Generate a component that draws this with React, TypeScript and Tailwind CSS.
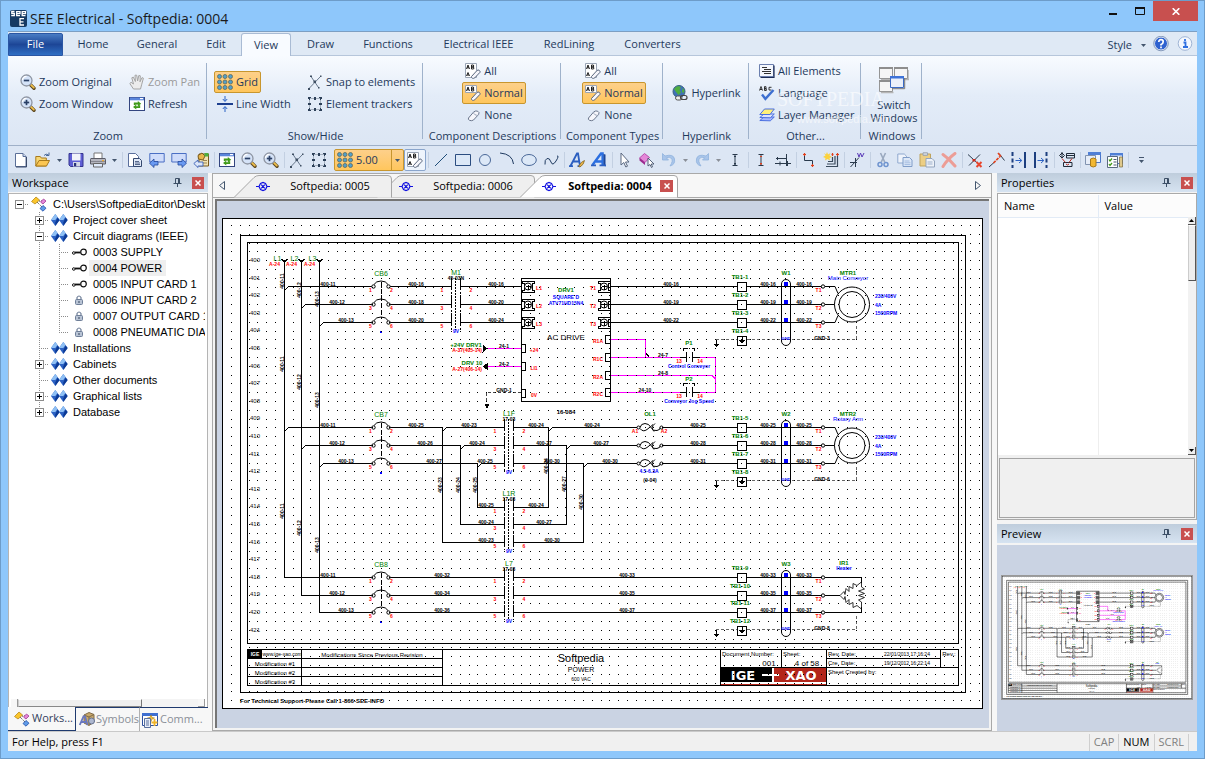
import type { ReactNode } from 'react';

/* ---------- icons ---------- */

function Ic({ children, size = 16 }: { children: ReactNode; size?: number }) {
  return (
    <svg width={size} height={size} viewBox="0 0 16 16" fill="none" className="shrink-0" aria-hidden="true">
      {children}
    </svg>
  );
}

const Magnifier = ({ plus }: { plus?: boolean }) => (
  <Ic>
    <path d="M10.500 10.800l3.500 3.400" stroke="#5f4a22" strokeWidth="3.400" strokeLinecap="round" />
    <path d="M11 10.800l2.800 2.800" stroke="#f0c04c" strokeWidth="1.800" strokeLinecap="round" />
    <circle cx="6.500" cy="6.500" r="5.500" fill="#d5e3f8" stroke="#8f96a3" strokeWidth="1.300" />
    <path d="M2.500 6q.5-3.500 4-3.700" stroke="#fff" strokeWidth="1.300" />
    <path d="M3.800 6.500h5.400" stroke="#2a3f66" strokeWidth="1.700" />
    {plus && <path d="M6.500 3.800v5.400" stroke="#2a3f66" strokeWidth="1.700" />}
  </Ic>
);
const Hand = () => (
  <Ic>
    <path
      d="M4.500 15L.8 9.500l1.300-1.200L4.500 10 2.800 3.800l1.500-.7L6.400 7.500 6 1.200h1.700L8.600 7l1.200-5.500 1.500.3L11 7.800l2-4.200 1.400.6-1.800 6.600L11.500 15z"
      fill="#ececec"
      stroke="#a4a4a4"
      strokeLinejoin="round"
    />
  </Ic>
);
const Refresh = () => (
  <Ic>
    <rect x=".5" y="1.500" width="15" height="13" fill="#fff" stroke="#33457f" />
    <path d="M1 1.500h14v2.800H1z" fill="#5a86dc" />
    <path d="M11 2h3v1.200h-3z" fill="#fff" />
    <path d="M4.800 9V6.500h4V5l3.400 2.700-3.400 2.600V8.500H6.500V9zM11.200 9.200v2.900H7.300v1.500L4 11l3.300-2.400v1.700h2.200V9.200z" fill="#3f9a18" />
  </Ic>
);
const GridDots = () => (
  <Ic>
    {[2.5, 8, 13.5].map((x) =>
      [2.5, 8, 13.5].map((y) => <circle key={`${x}-${y}`} cx={x} cy={y} r="2" fill="#4fa0cc" stroke="#6a7060" strokeWidth=".9" />),
    )}
  </Ic>
);
const LineWidth = () => (
  <Ic>
    <path d="M0 8h16" stroke="#1d3f8f" strokeWidth="2" />
    <path d="M8 0v5M8 16v-5M5.800 3L8 5.500 10.200 3M5.800 13L8 10.500l2.200 2.500" stroke="#2b62c4" />
  </Ic>
);
const Snap = () => (
  <Ic>
    <path d="M2 14.500L13.500 2.500M4 2.500l7.500 11" stroke="#5a6b80" strokeWidth=".9" />
    <path d="M1 14h2v2H1zM13 1.500h1.500V3H13zM3 1.500h2v1.500H3zM11 13h1.500v1.500H11z" fill="#3f4f63" />
    <path d="M6.500 6.500h2.500v2.500H6.500z" fill="#3f4f63" />
  </Ic>
);
const Tracker = () => (
  <Ic>
    <path d="M2.500 2.500h11v11h-11z" stroke="#6a7888" strokeDasharray="1 1" />
    <path
      d="M1 1h3v1H3v2H2V3H1zM12 1h3v2h-1v1h-1V2h-1zM1 13h1v-1h1v2h1v1H1zM13 12h1v1h1v2h-3v-1h1zM7 1h2v3H7zM7 12h2v3H7zM1 7h3v2H1zM12 7h3v2h-3z"
      fill="#2c3f58"
    />
  </Ic>
);
const Eraser = () => (
  <path d="M6.500 13.500L12 7.500q1-1 2.200-.2t.8 2L9.800 14.800q-1.300 1-2.500.4t-.8-1.700z" fill="#f6f6fb" stroke="#59667c" />
);
const AaAll = () => (
  <Ic>
    <path d="M.5.500h11v14H.5z" fill="#fff" stroke="#9aa5b5" />
    <path d="M1.500 6L3 2l1.500 4M2 4.800h2M6.500 2v4h2q1-1-.2-2-1.800 0-1.800 0h1.800q1-1 0-2zM1.500 13L3 9.500 4.500 13M2 12h2" stroke="#222" />
    <Eraser />
  </Ic>
);
const AaNormal = () => (
  <Ic>
    <path d="M.5.500h11v7H.5z" fill="#fff" stroke="#9aa5b5" />
    <path d="M1.500 6L3 2l1.500 4M2 4.800h2M6.500 2v4h2q1-1-.2-2-1.800 0-1.800 0h1.800q1-1 0-2z" stroke="#222" />
    <Eraser />
  </Ic>
);
const EraserOnly = () => (
  <Ic>
    <path d="M3.500 11L8.800 4.800q2-1.500 4-.5t.8 3.200L8.500 13q-1.800 1.200-3.800.4T3.500 11z" fill="#f6f6fb" stroke="#6a768c" />
    <path d="M8.800 4.800q-.5 2 1 2.800t3 .7" stroke="#9aa5b8" />
  </Ic>
);
const Globe = () => (
  <Ic>
    <circle cx="7" cy="6.500" r="6" fill="#3f72b8" stroke="#39607f" />
    <path d="M2 4q2-3 5-3l2 1.500L7.500 5 9 7.500 6.500 10 4 7zM11 3l1.500 3L11 8.500 9.800 6z" fill="#4fae3f" />
    <rect x="3.500" y="11" width="6.500" height="4" rx="2" fill="#eee" stroke="#555" />
    <rect x="8.500" y="10.500" width="6.500" height="4" rx="2" stroke="#444" strokeWidth="1.200" />
  </Ic>
);
const Elements = () => (
  <Ic>
    <path d="M.5 1.500h14v12H.5z" fill="#f4f7fd" stroke="#6b7fae" />
    <path d="M15 2.500v12H1.500" stroke="#1d2c55" strokeWidth="1.200" />
    <path d="M3 4.500h5M5 6.500h7M3 8.500h9M5 10.500h7" stroke="#333" />
  </Ic>
);
const Language = () => (
  <Ic>
    <path d="M.5 5.500L2 1.500l1.500 4M1 4.500h2M5.500 1.500v4h1.800V3.700H5.500 7V1.700H5.500M12.500 2.300H10V5h2.500" stroke="#222" strokeWidth=".9" />
    <path d="M3 9.500l3.400 4.300L14.500 5" stroke="#3d6fd0" strokeWidth="2.400" />
  </Ic>
);
const Layers = () => (
  <Ic>
    <path d="M.8 13.500L5 10h10.300l-4 3.800z" fill="#a9b9ff" stroke="#4a6fe0" />
    <path d="M.8 10.500L5 7h10.300l-4 3.800z" fill="#dbe2ff" stroke="#4a6fe0" />
    <path d="M.8 7.500L5.500 2h9.800L11 7.500z" fill="#fff07a" stroke="#4a6fe0" />
  </Ic>
);
const SwitchWindows = () => (
  <svg width="30" height="28" viewBox="0 0 30 28" fill="none" aria-hidden="true">
    <path d="M2 13.500h13.500M17 13.500h13V4M14.500 26.500H2" stroke="#b5b5b5" strokeWidth="1.500" />
    <path d="M.5 1.500h13v11H.5zM15.500 1.500h13v11h-13zM.5 14.500h13v11H.5z" fill="#f5f5f5" stroke="#959595" />
    <path d="M0 1h14v2H0zM15 1h14v2H15zM0 14h14v2H0z" fill="#8e8e8e" />
    <path d="M11.500 10.500h13v11h-13z" fill="#eaf0fa" stroke="#3a6ac4" />
    <path d="M11 10h14v2.500H11z" fill="#3f73d8" />
    <path d="M25.700 12v10.700H13" stroke="#777" />
  </svg>
);
const NewDoc = () => (
  <Ic>
    <path d="M2.500 1.500h7.500l3 3v10H2.500z" fill="#fff" stroke="#5a6f98" />
    <path d="M10 1.500v3h3" stroke="#5a6f98" fill="#cfdaee" />
    <path d="M13.500 5v10H3" stroke="#3a4a6a" />
  </Ic>
);
const Open = () => (
  <Ic>
    <path d="M.8 14V4.500h4.500l1 1.500h5v8z" fill="#f7d774" stroke="#a87a1c" />
    <path d="M.8 14L4 8.500h10.500L11.500 14z" fill="#fbc652" stroke="#a87a1c" />
    <path d="M9 3.500q2-2.500 4.500-.5M14 .5v3h-3" stroke="#4a6a9a" />
  </Ic>
);
const Save = () => (
  <Ic>
    <path d="M1 1.500h14v13H2.500L1 13z" fill="#5f5fd6" stroke="#34348f" />
    <path d="M4 1.500h8.500v7H4z" fill="#f0f2fa" />
    <path d="M5 10h7v4.500H5z" fill="#d4d8e6" />
    <path d="M6 11h2.200v3.200H6z" fill="#27307a" />
  </Ic>
);
const Print = () => (
  <Ic>
    <path d="M4 6V1h8v5" fill="#fff" stroke="#777" />
    <path d="M1 6.500h14q.5 0 .5 1V12H.5V7.500q0-1 .5-1z" fill="#b4b5be" stroke="#5b5c66" />
    <path d="M1 9.500h14" stroke="#85868f" />
    <path d="M3.500 11.500h9V15h-9z" fill="#dfeafa" stroke="#666" />
    <path d="M12 8h2v1.200h-2z" fill="#e8a83c" />
  </Ic>
);
const DocProps = () => (
  <Ic>
    <path d="M1.500 1.500h7l3 3v10h-10z" fill="#fff" stroke="#5a6f9c" />
    <path d="M6.500 6.500h6l2 2v6h-8z" fill="#dfe8f8" stroke="#34486e" />
    <path d="M8 9.500h4M8 11h5M8 12.500h5" stroke="#34486e" strokeWidth=".8" />
  </Ic>
);
const PageNav = ({ fwd }: { fwd?: boolean }) => (
  <Ic>
    <path d="M.8 1.500h14.400v8.500H.8z" fill="#cfdcfa" stroke="#4a6fc4" />
    {fwd ? (
      <path d="M7 9.500h4V7l4.500 4.200L11 15.500V13H7z" fill="#6a9af2" stroke="#22479a" strokeWidth=".8" />
    ) : (
      <path d="M9 9.500H5V7L.5 11.200 5 15.500V13h4z" fill="#6a9af2" stroke="#22479a" strokeWidth=".8" />
    )}
  </Ic>
);
const HandDoc = () => (
  <Ic>
    <path d="M6 2h9.500v12H6z" fill="#f2e3b4" stroke="#7a5a1c" />
    <path d="M5 3.500L9 1l3 3-2 4-4.500-1z" fill="#e8b64c" stroke="#7a5a1c" />
    <path d="M11.500 1h4v3.500h-4z" fill="#4fae3f" />
    <path d="M10 8.500h4M10 11h4" stroke="#9a8654" />
    <path d="M.8 11.500L5 8v2h5v4H5v1.500z" fill="#dce6f8" stroke="#3d62b8" strokeWidth=".9" />
  </Ic>
);
const LineI = () => (
  <Ic>
    <path d="M2 14L14 2" stroke="#1f4e79" />
  </Ic>
);
const RectI = () => (
  <Ic>
    <path d="M.5 2.500h15v11H.5z" fill="#dce8f7" stroke="#2b4d80" />
  </Ic>
);
const CircleI = () => (
  <Ic>
    <circle cx="8" cy="8" r="5.500" fill="#dce8f7" stroke="#4a6898" />
  </Ic>
);
const ArcI = () => (
  <Ic>
    <path d="M1 1Q13.500 2 14.500 12" stroke="#1f3a60" />
  </Ic>
);
const EllipseI = () => (
  <Ic>
    <ellipse cx="8" cy="8" rx="7.300" ry="5.500" fill="#dce8f7" stroke="#4a6898" />
  </Ic>
);
const CurveI = () => (
  <Ic>
    <path d="M2 12.500Q1.500 7.500 4 6.500T8 10t5-1 1-5" stroke="#1f3a60" />
  </Ic>
);
const TextA = () => (
  <Ic>
    <path d="M1.500 14L8 1.500h1L11 14M4 9.500h6M0 14.200h4M8.500 14.200h3.500" stroke="#2c5fc0" strokeWidth="1.800" />
    <path d="M9.500 14.500q2.500-5 6-6-.5 4-4.500 6.500z" fill="#e8b64c" stroke="#7a5a1c" strokeWidth=".7" />
  </Ic>
);
const TextB = () => (
  <Ic>
    <path d="M1.500 13L10 1.500h1.600V13M5 9.500h6" stroke="#2c6fe0" strokeWidth="2.400" />
    <path d="M12.500 2l2 .5v12l-2-1z" fill="#1d4697" />
    <path d="M0 13.400h5M8.500 13.400h6.500" stroke="#2c5fc0" strokeWidth="1.800" />
  </Ic>
);
const Cursor = () => (
  <Ic>
    <path d="M4 1v12l2.800-2.500L8.800 15l1.700-.8-2-4.200H12z" fill="#fff" stroke="#5a6880" />
  </Ic>
);
const CursorBox = () => (
  <Ic>
    <path d="M.5 6l5-4.500 5 4-4.500 5z" fill="#e487d8" stroke="#b84fac" />
    <path d="M.5 6l5.500 4.500v2.500L.5 8.500z" fill="#9a2a8e" />
    <path d="M9 6v8l2-1.500 1.500 3 1-.6-1.200-2.900H15z" fill="#fff" stroke="#45546c" strokeWidth=".9" />
  </Ic>
);
const Undo = ({ flip }: { flip?: boolean }) => (
  <Ic>
    <path
      d={
        flip
          ? 'M14.500 1.500v6.500H8.500l2.200-2.200Q7.500 4.200 5.500 6.500T7 14Q1.500 12.500 2.500 7t9.500-3z'
          : 'M1.500 1.500v6.500h6L5.300 5.800Q8.500 4.200 10.500 6.500T9 14q5.500-1.500 4.500-7T4 4z'
      }
      fill="#a9c5ea"
      stroke="#8fb2dd"
      strokeWidth=".8"
    />
  </Ic>
);
const IBeam = ({ red }: { red?: boolean }) => (
  <Ic>
    <path d="M5.500 2.500H8M8 2.500h2.500M5.500 13.500h5M8 2.500v11" stroke="#2a3a4c" />
    <path d="M7 4h2v1H7zM7 11h2v1.500H7z" fill={red ? '#e0401c' : '#2a3a4c'} />
  </Ic>
);
const BarsCross = () => (
  <Ic>
    <path d="M1 6.500h11M0 11.500h16M11.500 2v12" stroke="#2a3a4c" />
    <path d="M2.500 5v3M5 9.500v4M12.500 9v5" stroke="#2a3a4c" />
  </Ic>
);
const StepLine = () => (
  <Ic>
    <path d="M3.500 3v5.500h8V13" stroke="#2a3a4c" />
    <path d="M2 2.500h3M3.500 1v3M10 13.500h3M11.500 12v3" stroke="#e0401c" strokeWidth="1.200" />
  </Ic>
);
const StarLines = () => (
  <Ic>
    <path d="M4 0l1 2.500L7.500 1 6.500 3.500 9 5 6.500 6l.5 2.500L4.500 7 2 8.500 2.500 6 0 5l2.500-1.500L1 1l2 1.500z" fill="#fbd23c" />
    <path d="M14.500 4v10.500H3M12 4v8H4M9.500 5v4.500H5" stroke="#3a4a5c" strokeWidth="1.200" />
    <path d="M9.500 1v3M8.500 2.500h2M14.500 1v3M13 2.500h3" stroke="#e0401c" strokeWidth="1.200" />
  </Ic>
);
const WireLabel = () => (
  <Ic>
    <path d="M1.500 15L10 5.500M1 10.500h7M6.500 6v9" stroke="#2a3a4c" />
    <path d="M8.500 1L10 5l1.500-4L13 5l2-4" stroke="#5a3ab8" />
  </Ic>
);
const Cut = () => (
  <Ic>
    <path d="M5.500 1l4.200 9M10.500 1L6.300 10" stroke="#9aa9bf" strokeWidth="1.600" />
    <circle cx="5" cy="12.500" r="2" stroke="#6f94cf" strokeWidth="1.500" />
    <circle cx="11" cy="12.500" r="2" stroke="#6f94cf" strokeWidth="1.500" />
  </Ic>
);
const Copy = () => (
  <Ic>
    <path d="M.8 2h6.500l2.200 2.200V11H.8z" fill="#eef3fb" stroke="#8fa9cf" />
    <path d="M6 5.500h6.500L15 8v6.500H6z" fill="#dde8f8" stroke="#7f9cc8" />
    <path d="M7.500 9h5M7.500 10.800h6M7.500 12.600h6" stroke="#9db7dd" strokeWidth=".9" />
  </Ic>
);
const Paste = () => (
  <Ic>
    <path d="M1 2h10.500v12H1z" fill="#ecce84" stroke="#bfa35c" />
    <path d="M4 .8h4.500v2.500H4z" fill="#d8dce4" stroke="#9aa3b0" />
    <path d="M7 6.500h6L15.500 9v6H7z" fill="#eef2f8" stroke="#93a4bd" />
    <path d="M8.500 10h5M8.500 12h5" stroke="#9db0cc" />
  </Ic>
);
const Delete = () => (
  <Ic>
    <path d="M2 2.500Q8 6.500 14 14M14 1.500Q7 6.500 2 14.500" stroke="#ec9d96" strokeWidth="3" strokeLinecap="round" />
  </Ic>
);
const CutNode = () => (
  <Ic>
    <path d="M1 2.500l11 10M13 2.500L2 13.500" stroke="#2a3a4c" />
    <path d="M9.500 10l5 5M14.500 10l-5 5" stroke="#e8452c" strokeWidth="2" />
    <path d="M5.500 7h3v2.500h-3z" fill="#c82a1c" />
  </Ic>
);
const Diagonal = () => (
  <Ic>
    <path d="M0 15l5-4.500M10 1.500l5.500 7" stroke="#2a3a4c" />
    <path d="M4.500 11L11 4.500" stroke="#e0401c" strokeWidth="1.600" strokeDasharray="3 1" />
    <path d="M9 1l3 3.500" stroke="#e0401c" strokeWidth="1.600" />
  </Ic>
);
const AlignBars = ({ flip }: { flip?: boolean }) => (
  <Ic>
    <path d={flip ? 'M2 0v16' : 'M14 0v16'} stroke="#1d3f7f" strokeWidth="2" />
    <path d={flip ? 'M13.500 0v16' : 'M1.500 0v16'} stroke="#1d3f7f" strokeWidth="2" strokeDasharray="4 2.500" />
    <path d="M4.500 8.500h6M8 6l2.800 2.500L8 11" stroke="#2b62c4" />
  </Ic>
);
const Network = () => (
  <Ic>
    <path d="M3 0v6M.5 3.500L3 1l2.500 2.500L3 6zM7.500 1.500h8v4.500h-8zM7.500 3.500h8M4.500 10.500h8.500v4H4.500z" stroke="#1f2a38" />
    <path d="M3 6.500l3.500 4M13 6.500l-3 4M7 12l1.500 1L10 12" stroke="#b8281c" />
  </Ic>
);
const DbWindow = () => (
  <Ic>
    <path d="M3.500.500h12v10h-12z" fill="#eef4fd" stroke="#4a76c8" />
    <path d="M3 0h13v3H3z" fill="#4f7fd6" />
    <path d="M.5 3.500h10v9H.5z" fill="#e6edf8" stroke="#8193b0" />
    <path d="M5.500 7v7q2.700 2 5.500 0V7q-2.800-2-5.500 0z" fill="#f2b832" stroke="#a87a1c" />
  </Ic>
);
const CheckWindow = () => (
  <Ic>
    <path d="M3.500 1.500h12v10h-12z" fill="#eef4fd" stroke="#4a76c8" />
    <path d="M3 1h13v2.500H3z" fill="#4f7fd6" />
    <path d="M12.500 5h3v10h-3z" fill="#dfc98c" stroke="#7a6a3c" strokeWidth=".7" />
    <path d="M.5 4.500h10v11H.5z" fill="#fff" stroke="#5a6a80" />
    <path d="M2 7.500L3 9l2-2.500M2 12l1 1.500L5 11" stroke="#3f9a18" strokeWidth="1.300" />
    <path d="M6.500 7.500h3M6.500 10h3M6.500 13h3" stroke="#4a5a70" />
  </Ic>
);
const Pin = () => (
  <svg width="9" height="9" viewBox="0 0 9 9" fill="none" aria-hidden="true">
    <path d="M2.500 5V.5h4V5M5.500.5V5M.5 5.500h8M4.500 6v3" stroke="#3c4f66" />
  </svg>
);
const CloseX = () => (
  <svg width="6" height="6" viewBox="0 0 6 6" aria-hidden="true">
    <path d="M.5.5l5 5M5.500.5l-5 5" stroke="#fff" strokeWidth="1.500" />
  </svg>
);
const Caret = ({ muted }: { muted?: boolean }) => (
  <svg width="5" height="3" viewBox="0 0 5 3" aria-hidden="true">
    <path d="M0 0h5L2.500 3z" fill={muted ? '#8a8f98' : '#44566e'} />
  </svg>
);
const Folders = () => (
  <svg width="17" height="12" viewBox="0 0 17 12" aria-hidden="true">
    {[0, 8].map((x) => (
      <g key={x}>
        <path d={`M${x} 6l4.300-6 4.300 6-4.300 6z`} fill="#2c62c4" />
        <path d={`M${x + 4.3} 0L${x} 6h4.300l2.200-3z`} fill="#8fc0f4" />
        <path d={`M${x + 4.3} 12l4.300-6-2-2.500-2.300 5z`} fill="#0c3a94" />
      </g>
    ))}
  </svg>
);
const ProjectIcon = () => (
  <Ic>
    <path d="M6 6l5 5M8 5h4" stroke="#333" strokeDasharray="1 1" />
    <path d="M.5 5.500L5 1l3.500 3-4.500 4z" fill="#fbc62c" stroke="#b88a1c" strokeWidth=".8" />
    <path d="M9.500 6l3-3L15 5l-3 3z" fill="#e487d8" stroke="#a23a96" strokeWidth=".8" />
    <path d="M9 12.500l3-3 3 2.700-3 3z" fill="#5f9be8" stroke="#1f4ea8" strokeWidth=".8" />
  </Ic>
);
const SwitchNode = () => (
  <svg width="15" height="9" viewBox="0 0 15 9" fill="none" aria-hidden="true">
    <circle cx="1.800" cy="5" r="1.300" fill="#fff" stroke="#111" />
    <path d="M3 4.500h5.500" stroke="#111" strokeWidth="1.800" />
    <circle cx="11.500" cy="4" r="2.800" fill="#fff" stroke="#111" strokeWidth="1.200" />
  </svg>
);
const Lock = () => (
  <svg width="8" height="10" viewBox="0 0 8 10" fill="none" aria-hidden="true">
    <path d="M2 5V2.500Q4-.5 6 2.500V5" stroke="#6f7f98" strokeWidth="1.200" />
    <rect x=".5" y="4.500" width="7" height="5" rx="1" fill="#b8c3d4" stroke="#6f7f98" />
    <path d="M3 7h2" stroke="#34445c" />
  </svg>
);
const TabNode = () => (
  <svg width="14" height="11" viewBox="0 0 14 11" fill="none" aria-hidden="true">
    <path d="M0 5.500h3M11 5.500h3M3 5.500l1.500-3L7 1.500l2.500 1 1.500 3-1.500 3-2.500 1-2.500-1zM5.200 3.700l3.600 3.600M8.800 3.700L5.200 7.300" stroke="#1010e0" strokeWidth="1.200" />
  </svg>
);
const SymbolsIcon = () => (
  <Ic>
    <path d="M5 3l5-2.500 5 2V10l-5 3.500L5 11z" fill="#c9a86a" stroke="#7f6a48" />
    <path d="M5 3l5 2v8M10 5l5-2.500" stroke="#7f6a48" />
    <path d="M.8 13L4.500 4.500H6L8.500 13M2 10h5" stroke="#6a78c0" strokeWidth="1.800" />
    <circle cx="12.500" cy="9" r="3" fill="#aeb8d0" stroke="#66728f" />
  </Ic>
);
const CommandsIcon = () => (
  <Ic>
    <path d="M.5 1.500h15v12H.5z" fill="#fff" stroke="#2d4f9e" />
    <path d="M0 1h16v3H0z" fill="#3f6fd0" />
    <path d="M9 3l1 2.500L12.500 6 10 7 9 9.500 8 7 5.500 6 8 5.500z" fill="#fbc62c" stroke="#a87a1c" strokeWidth=".6" />
    <path d="M2.500 6.500h6v9h-6z" fill="#e9effa" stroke="#5a6f9c" />
    <path d="M4 9h3M4 11h3M4 13h3" stroke="#5a6f9c" />
    <path d="M12.500 7v7M9.500 10.500h6" stroke="#f0b428" strokeWidth="1.800" />
  </Ic>
);

/* ---------- schematic ---------- */

const GREEN = '#008000';
const BLUE = '#0000ff';
const RED = '#ff0000';
const PINK = '#ff00ff';

type LabelProps = { x: number; y: number; c?: string; s?: number; a?: 'start' | 'middle' | 'end'; v?: boolean; b?: boolean; children: ReactNode };
function L({ x, y, c = '#000', s = 5, a = 'middle', v, b = true, children }: LabelProps) {
  return (
    <text
      x={x}
      y={y}
      fill={c}
      fontSize={s}
      textAnchor={a}
      fontWeight={b ? 700 : 400}
      stroke="none"
      transform={v ? `rotate(-90 ${x} ${y})` : undefined}
    >
      {children}
    </text>
  );
}

const dots = (() => {
  let d = '';
  for (let i = 0; i < 86; i++)
    for (let j = 0; j < 56; j++) {
      const x = Math.round(231 + i * 8.8);
      const y = Math.round(225 + j * 8.8);
      if (x < 982 && y < 710) d += `M${x} ${y}h1v1h-1z`;
    }
  return d;
})();

function Breaker({ rows, name }: { rows: number[]; name: string }) {
  return (
    <g>
      <L x={381} y={rows[0] - 11} c={GREEN} s={7} b={false}>{name}</L>
      <path d={`M381.500 ${rows[0] - 5}V${rows[2] - 4}`} strokeDasharray="5 2" />
      {rows.map((y, i) => (
        <g key={y}>
          <g shapeRendering="auto">
            <path d={`M374 ${y - 2}Q376 ${y - 5.5} 381 ${y - 5.5}T388 ${y - 2}`} />
            <circle cx="373.500" cy={y} r="1.700" fill="#fff" />
            <circle cx="388.500" cy={y} r="1.700" fill="#fff" />
          </g>
          <L x={370.5} y={y + 5} c={RED}>{i * 2 + 1}</L>
          <L x={391.5} y={y + 5} c={RED}>{i * 2 + 2}</L>
        </g>
      ))}
      <path d={`M380 ${rows[2] + 9.5}h2`} stroke={BLUE} strokeWidth="2" />
    </g>
  );
}

function Contactor({ x, rows, name, sub }: { x: number; rows: number[]; name: string; sub: string }) {
  const top = rows[0] - 9;
  const bottom = rows[2] + 7;
  return (
    <g>
      <path d={`M${x - 4.5} ${top}h9V${bottom}h-9z`} fill="#fff" stroke="none" />
      <path d={`M${x - 4.5} ${top}V${bottom}M${x + 4.5} ${top}V${bottom}`} strokeDasharray="12 2 2 2" />
      <path d={`M${x - 0.5} ${top}V${bottom}`} strokeDasharray="2 1" />
      <L x={x} y={top - 3} c={GREEN} s={7} b={false}>{name}</L>
      <L x={x} y={top + 2}>{sub}</L>
      <L x={x} y={bottom + 3} c={BLUE}>9V</L>
      {rows.map((y, i) => (
        <g key={y}>
          <L x={x - 14} y={y + 5} c={RED}>{i * 2 + 1}</L>
          <L x={x + 15} y={y + 5} c={RED}>{i * 2 + 2}</L>
        </g>
      ))}
    </g>
  );
}

function Terminals({ rows, first, cable, wires }: { rows: number[]; first: number; cable: string; wires: string[] }) {
  const g = rows[2] + 17;
  return (
    <g>
      <path d={`M716 ${g}H737M747 ${g}H856.500V${rows[2] + 1}`} stroke="#666" strokeDasharray="3 2" />
      <path d={`M716.500 ${g}v7`} />
      <path d={`M713.500 ${g + 4}h6l-3 4z`} fill="#000" stroke="none" />
      {[...rows, g + 1].map((y, i) => (
        <g key={y}>
          <rect x="737.500" y={y - 4.5} width="9" height="9" fill="#fff" />
          <L x={740} y={y - 8} c={GREEN} s={6}>{`TB1-${first + i}`}</L>
        </g>
      ))}
      <path d={`M742 ${g - 3}v4M739.500 ${g + 1}h5l-2.500 2z`} fill="#000" />
      <rect x="781.500" y={rows[0] - 7} width="9" height="66" rx="4.500" shapeRendering="auto" />
      <L x={786} y={rows[0] - 12} c={GREEN} s={6}>{cable}</L>
      {rows.map((y, i) => (
        <g key={y}>
          <rect x="784" y={y - 4} width="3" height="3" fill={BLUE} stroke={BLUE} />
          <L x={768} y={y - 0.5}>{wires[i]}</L>
          <L x={804} y={y - 0.5}>{wires[i]}</L>
          <circle cx="823" cy={y} r="1.700" fill="#fff" shapeRendering="auto" />
          <L x={818.5} y={y + 5} c={RED}>{`T${i + 1}`}</L>
        </g>
      ))}
      <L x={786} y={g} c={BLUE} s={4}>GND</L>
      <L x={822} y={g}>{`GND-${first === 1 ? 3 : first === 5 ? 6 : 8}`}</L>
    </g>
  );
}

function Motor({ y, name, desc }: { y: number; name: string; desc: string }) {
  return (
    <g>
      <g shapeRendering="auto">
        <circle cx="852" cy={y} r="17.500" fill="#fff" />
        <circle cx="852" cy={y} r="13" />
        <path d={`M825 ${y - 18}h10l3 7M825 ${y + 18}h10l3-7M825 ${y}h9.500`} />
      </g>
      <L x={848} y={y - 30} c={GREEN} s={6}>{name}</L>
      <L x={848} y={y - 24.5} c={BLUE} s={6} b={false}>{desc}</L>
      <L x={875} y={y - 7} c={BLUE} a="start">230/400V</L>
      <L x={875} y={y + 2} c={BLUE} a="start">4A</L>
      <L x={875} y={y + 10} c={BLUE} a="start">1500RPM</L>
    </g>
  );
}

const ROWS_A = [286.5, 304.5, 322.5];
const ROWS_B = [427.5, 445.5, 463.5];
const ROWS_R = [507.5, 524.5, 542.5];
const ROWS_C = [577.5, 595.5, 612.5];
const FEEDS = [284.5, 301.5, 319.5];

function Schematic({ className, smooth }: { className: string; smooth?: boolean }) {
  return (
    <svg
      viewBox="222 218 761 491"
      className={className}
      fill="none"
      stroke="#000"
      strokeWidth={smooth ? 2 : 1}
      shapeRendering={smooth ? 'auto' : 'crispEdges'}
      fontFamily="'Liberation Sans', Arial, sans-serif"
      role="img"
      aria-label="Circuit diagram 0004 POWER"
    >
      <rect x="222.500" y="218.500" width="760" height="490" fill="#fff" />
      <path d="M240.500 235.500h725v457h-725zM247.500 242.500h711v401h-711z" />
      {Array.from({ length: 22 }, (_, i) => (
        <L key={i} x={250} y={262 + i * 17.6} s={6} a="start" b={false} c="#111">{400 + i}</L>
      ))}

      {/* supply feeders */}
      {FEEDS.map((x, i) => (
        <g key={x}>
          <path d={`M${x} 260V${ROWS_C[i]}H372`} />
          <path d={`M${x - 3} 259l3 3 3-3M${x - 1} 261h2`} strokeWidth="1.500" />
          <L x={x - 7} y={261} c={GREEN} s={7} b={false}>{`L${i + 1}`}</L>
          <L x={x - 10} y={266} c={RED}>A-24</L>
          {[273 + i * 9, 356 + i * 18, 503 + i * 17].map((y) => (
            <L key={y} x={x - 1} y={y + 8} v>{`400-1${i + 1}`}</L>
          ))}
          {[ROWS_A[i], ROWS_B[i]].map((y) => (
            <g key={y}>
              <path d={`M${x} ${y + 4}l4-4H372`} />
              <L x={328 + i * 9} y={y - 0.5}>{`400-1${i + 1}`}</L>
            </g>
          ))}
          <L x={328 + i * 9} y={ROWS_C[i] - 0.5}>{`400-1${i + 1}`}</L>
        </g>
      ))}

      {/* main conveyor drive */}
      {ROWS_A.map((y, i) => (
        <g key={y}>
          <path d={`M390 ${y}H521M611 ${y}H822`} />
          <L x={416} y={y - 0.5}>{`400-${16 + i * 2}`}</L>
          <L x={496} y={y - 0.5}>{`400-${16 + i * 4}`}</L>
          <L x={671} y={y - 0.5}>{`400-${16 + i * 3}`}</L>
        </g>
      ))}
      <Breaker rows={ROWS_A} name="CB6" />
      <Contactor x={456} rows={ROWS_A} name="M1" sub="45-03N" />
      <rect x="521.500" y="278.500" width="89" height="123" fill="#fff" />
      {ROWS_A.map((y, i) => (
        <g key={y}>
          {[528, 604].map((x) => (
            <g key={x}>
              <path d={`M${x - 6} ${y - 5}h12v2h-2v7h2v2h-12v-2h2v-7h-2z`} fill="#fff" />
              <circle cx={x} cy={y} r="3.500" fill="#fff" shapeRendering="auto" />
              <path d={`M${x - 2} ${y}h5M${x + 0.5} ${y - 2}v5`} strokeWidth="1.500" />
            </g>
          ))}
          <L x={539} y={y + 3} c={RED}>{`L${i + 1}`}</L>
          <L x={593} y={y + 3} c={RED}>{`T${i + 1}`}</L>
        </g>
      ))}
      <L x={566} y={292} c={GREEN} s={6}>DRV1</L>
      <L x={566} y={299} c={BLUE}>SQUARE D</L>
      <L x={566} y={305} c={BLUE}>ATV71HD15N4</L>
      <L x={566} y={340} s={8} b={false}>AC DRIVE</L>
      <L x={566} y={414} s={6}>16-084</L>
      {[348.5, 366.5, 393.5].map((y, i) => (
        <g key={y}>
          <rect x="521.500" y={y - 4} width="4" height="8" fill="#fff" />
          <L x={534} y={y + 3} c={RED}>{['+24', 'LI1', '0V'][i]}</L>
        </g>
      ))}
      {[339.5, 357.5, 375.5, 392.5].map((y, i) => (
        <g key={y}>
          <rect x="605.500" y={y - 4} width="5" height="8" fill="#fff" />
          <L x={598} y={y + 3} c={RED}>{['R1A', 'R1C', 'R2A', 'R2C'][i]}</L>
        </g>
      ))}
      <path d="M486 348.500H521M486 366.500H521M611 339.500H645.500V357.500M611 357.500H680M700 357.500H715.500V392.500H700M611 375.500H712l3 3M611 392.500H680" stroke={PINK} />
      <path d="M483 345.500l4 3-4 3zM487.500 363.500l-4 3 4 3z" fill="#000" />
      <L x={466} y={347} c={GREEN} s={6}>+24V DRV1</L>
      <L x={467} y={352} c={RED}>A-37(405-14)</L>
      <L x={472} y={365} c={GREEN} s={6}>DRV 10</L>
      <L x={467} y={371} c={RED}>A-27(406-14)</L>
      <L x={504} y={347.5}>24-1</L>
      <L x={504} y={365.5}>24-2</L>
      <L x={504} y={391.5}>GND-1</L>
      <path d="M521 392.500H486.500V403" strokeDasharray="3 2" stroke="#444" />
      <path d="M484 403.500h6l-3 5z" fill="#000" stroke="none" />
      <path d="M646 353l3 4M680 357.500h6M692 357.500h8M686.500 352v10M692.500 352v10M680 392.500h6M692 392.500h8M686.500 387v10M692.500 387v10" />
      <path d="M683.500 351v-3h4m4 0h3v3M683.500 386v-3h4m4 0h3v3" />
      <L x={689} y={345} c={GREEN} s={6}>P1</L>
      <L x={689} y={381} c={GREEN} s={6}>P2</L>
      <L x={663} y={356.5}>24-7</L>
      <L x={663} y={374.5}>24-8</L>
      <L x={645} y={391.5}>24-10</L>
      {[357.5, 392.5].map((y) => (
        <g key={y}>
          <L x={679} y={y + 5} c={RED}>13</L>
          <L x={700} y={y + 5} c={RED}>14</L>
        </g>
      ))}
      <L x={689} y={368} c={BLUE}>Control Conveyor</L>
      <L x={689} y={403} c={BLUE}>Conveyor Jog Speed</L>
      <Terminals rows={ROWS_A} first={1} cable="W1" wires={['400-16', '400-19', '400-22']} />
      <Motor y={304.5} name="MTR1" desc="Main Conveyor" />

      {/* reversing starter */}
      {ROWS_B.map((y, i) => {
        const lx = [442.5, 460.5, 477.5][i];
        const rx = [548.5, 566.5, 583.5][i];
        const back = ROWS_R[2 - i];
        const out = ROWS_R[i];
        return (
          <g key={y}>
            <path d={`M390 ${y}H${lx}V${back}H504M${lx} ${y + 4}l4-4H${rx}V${out}H514M${rx} ${y + 4}l4-4H637M663 ${y}H822`} />
            <L x={416 + i * 9} y={y - 0.5}>{`400-${25 + i}`}</L>
            <L x={469 + i * 8} y={y - 0.5}>{`400-${23 + i}`}</L>
            <L x={486 - i * 0} y={out - 0.5}>{`400-${25 - i}`}</L>
            <L x={536 + i * 8} y={y - 0.5}>{`400-${24 + i * 3}`}</L>
            <L x={536 + i * 8} y={out - 0.5}>{`400-${24 + i * 3}`}</L>
            <L x={592 + i * 9} y={y - 0.5}>{`400-${24 + i * 3}`}</L>
            <L x={698} y={y - 0.5}>{`400-${25 + i * 3}`}</L>
            <L x={lx - 1} y={485} v>{`400-${23 + i}`}</L>
            <L x={rx - 1} y={466 + i * 18} v>{`400-${24 + i * 3}`}</L>
            <g shapeRendering="auto">
              <path d={`M640 ${y}Q641 ${y - 4} 645 ${y - 4}T651 ${y}Q653 ${y + 4} 657 ${y + 3}T660 ${y}M640 ${y + 1}Q643 ${y + 5} 647 ${y + 2}T653 ${y - 3}M655 ${y - 4}Q650 ${y} 654 ${y + 4}`} />
              <circle cx="638.500" cy={y} r="1.500" fill="#fff" />
              <circle cx="661.500" cy={y} r="1.500" fill="#fff" />
            </g>
          </g>
        );
      })}
      <L x={635} y={433} c={RED}>A1</L>
      <L x={664} y={433} c={RED}>A2</L>
      <Breaker rows={ROWS_B} name="CB7" />
      <Contactor x={509} rows={ROWS_B} name="L1F" sub="17-03" />
      <Contactor x={509} rows={ROWS_R} name="L1R" sub="17-03" />
      <L x={650} y={416} c={GREEN} s={6}>OL1</L>
      <L x={649} y={473} c={BLUE}>4.5-6.3A</L>
      <L x={650} y={482}>(9-04)</L>
      <Terminals rows={ROWS_B} first={5} cable="W2" wires={['400-25', '400-28', '400-31']} />
      <Motor y={445.5} name="MTR2" desc="Rotary Arm" />

      {/* heater circuit */}
      {ROWS_C.map((y, i) => (
        <g key={y}>
          <path d={`M390 ${y}H504M514 ${y}H822`} />
          <L x={442} y={y - 0.5}>{`400-${32 + i * 2}`}</L>
          <L x={627} y={y - 0.5}>{`400-${33 + i * 2}`}</L>
        </g>
      ))}
      <Breaker rows={ROWS_C} name="CB8" />
      <Contactor x={509} rows={ROWS_C} name="L7" sub="17-03" />
      <Terminals rows={ROWS_C} first={9} cable="W3" wires={['400-33', '400-35', '400-37']} />
      <path d="M825 577.500H861.500V583M825 595.500H840M825 612.500H861.500V607" />
      <path
        d="M840 595.500l4-4 1 3 1-6 3 3 0-5 4 2 0-5 4 2 5-4M840 595.500l4 4 1-3 1 6 3-3 0 5 4-2 0 5 4-2 5 4M861.500 583v4l3 2-6 2 6 2.500-6 2 6 2-6 2.500 3 2v5"
        shapeRendering="auto"
        strokeWidth=".8"
      />
      <L x={844} y={565} c={GREEN} s={6}>IR1</L>
      <L x={844} y={570} c={BLUE}>Heater</L>

      {/* title block */}
      <path d="M247.500 649.500h711v36h-711zM301.500 649.500v36M442.500 649.500v36M247.500 658.500h195M247.500 667.500h195M247.500 676.500h195M720.500 649.500v36M781.500 649.500v18M826.500 649.500v36M940.500 649.500v18M720.500 667.500h238M826.500 658.500h114" />
      <rect x="248" y="650" width="14" height="8" fill="#000" stroke="none" />
      <L x={255} y={655.5} c="#fff">IGE</L>
      <L x={282} y={655.5} b={false}>www.ige-xao.com</L>
      <L x={372} y={657} s={6} b={false}>Modifications Since Previous Revision</L>
      <L x={275} y={666} s={6} b={false}>Modification #1</L>
      <L x={275} y={675} s={6} b={false}>Modification #2</L>
      <L x={275} y={684} s={6} b={false}>Modification #3</L>
      <L x={581} y={662} s={11} b={false}>Softpedia</L>
      <L x={581} y={672} s={7} b={false}>POWER</L>
      <L x={581} y={681} s={5} b={false}>600 VAC</L>
      <L x={722} y={656} s={6} a="start" b={false}>Document Number:</L>
      <L x={769} y={665.5} s={8} b={false}>001</L>
      <L x={783} y={656} s={6} a="start" b={false}>Sheet:</L>
      <L x={807} y={665.5} s={8} b={false}>4 of 58</L>
      <L x={828} y={656} s={6} a="start" b={false}>Rev. Date:</L>
      <L x={828} y={665} s={6} a="start" b={false}>Cre. Date:</L>
      <L x={907} y={656} s={5} b={false}>22/01/2013 17:16:24</L>
      <L x={907} y={665} s={5} b={false}>19/12/2012 16:22:14</L>
      <L x={949} y={656} s={6} b={false}>Rev.:</L>
      <L x={828} y={674} s={6} a="start" b={false}>Sheet Created by:</L>
      <path d="M721 668h51v14h-51z" fill="#000" stroke="none" />
      <path d="M773 668h53v14h-53z" fill="#b3261b" stroke="none" />
      <path d="M762 675h17M772.500 668v14" stroke="#fff" strokeWidth="2" />
      <path d="M722 682.500h104" stroke="#fff" />
      <path d="M721 684h105" stroke="#b3261b" />
      <g stroke="none" fill="#fff" fontSize="13" fontWeight="700" fontFamily="'DejaVu Sans', sans-serif" textAnchor="middle">
        <text x="743" y="680">IGE</text>
        <text x="801" y="680">XAO</text>
      </g>
      <L x={240} y={703} s={6} a="start">For Technical Support-Please Call 1-866-SEE-INFO</L>
      <path d={dots} fill="#000" stroke="none" />
    </svg>
  );
}

/* ---------- ribbon ---------- */

const RIBBON_TABS: [string, string][] = [
  ['Home', 'w-[60px]'],
  ['General', 'w-[68px]'],
  ['Edit', 'w-[50px]'],
  ['View', 'w-[50px]'],
  ['Draw', 'w-[59px]'],
  ['Functions', 'w-[76px]'],
  ['Electrical IEEE', 'w-[105px]'],
  ['RedLining', 'w-[76px]'],
  ['Converters', 'w-[91px]'],
];

function Cmd({ icon, label, active, disabled }: { icon: ReactNode; label: string; active?: boolean; disabled?: boolean }) {
  return (
    <button
      disabled={disabled}
      className={`flex h-[22px] items-center gap-[3px] whitespace-nowrap rounded-[2px] border px-[2px] ${
        active ? 'border-[#c8962e] bg-linear-to-b from-[#fdd08a] to-[#ffc65c]' : 'border-transparent'
      } ${disabled ? 'text-[#9a9a9a]' : ''}`}
    >
      {icon}
      {label}
    </button>
  );
}

function Group({ title, width, children }: { title: string; width: string; children: ReactNode }) {
  return (
    <section className={`relative flex shrink-0 flex-col pt-1 ${width}`} aria-label={title}>
      <div className="flex h-[66px] items-center">{children}</div>
      <h2 className="mt-[2px] pl-px text-center leading-4 whitespace-nowrap">{title}</h2>
      <div className="absolute top-[7px] right-0 h-[76px] w-px bg-[#9fb2cb]" />
    </section>
  );
}

function AaGroup() {
  return (
    <div className="mx-auto flex flex-col items-start pl-1">
      <Cmd icon={<AaAll />} label="All" />
      <Cmd icon={<AaNormal />} label="Normal" active />
      <Cmd icon={<EraserOnly />} label="None" />
    </div>
  );
}

function Ribbon() {
  return (
    <div className="relative flex h-[90px] overflow-hidden border-b border-[#9fb0c8] bg-linear-to-b from-[#f8fbff] via-[#e3ecf8] via-45% to-[#dce6f4]">
      <Group title="Zoom" width="w-[199px]">
        <div className="grid grid-cols-[109px_auto] justify-items-start pl-[9px]">
          <Cmd icon={<Magnifier />} label="Zoom Original" />
          <Cmd icon={<Hand />} label="Zoom Pan" disabled />
          <Cmd icon={<Magnifier plus />} label="Zoom Window" />
          <Cmd icon={<Refresh />} label="Refresh" />
        </div>
      </Group>
      <Group title="Show/Hide" width="w-[216px]">
        <div className="grid grid-cols-[90px_auto] justify-items-start pl-[7px]">
          <Cmd icon={<GridDots />} label="Grid" active />
          <Cmd icon={<Snap />} label="Snap to elements" />
          <Cmd icon={<LineWidth />} label="Line Width" />
          <Cmd icon={<Tracker />} label="Element trackers" />
        </div>
      </Group>
      <Group title="Component Descriptions" width="w-[138px]">
        <AaGroup />
      </Group>
      <Group title="Component Types" width="w-[102px]">
        <AaGroup />
      </Group>
      <Group title="Hyperlink" width="w-[86px]">
        <div className="mx-auto pl-px">
          <Cmd icon={<Globe />} label="Hyperlink" />
        </div>
      </Group>
      <Group title="Other..." width="w-[112px]">
        <div className="flex flex-col items-start pl-[7px]">
          <Cmd icon={<Elements />} label="All Elements" />
          <Cmd icon={<Language />} label="Language" />
          <Cmd icon={<Layers />} label="Layer Manager" />
        </div>
      </Group>
      <Group title="Windows" width="w-[61px]">
        <button className="mx-auto flex flex-col items-center pt-[3px] pl-[5px] leading-[13px]">
          <SwitchWindows />
          <span className="pt-1">Switch</span>
          <span>Windows</span>
        </button>
      </Group>
      <div className="pointer-events-none absolute top-[31px] left-[769px] text-white/60">
        <div className="text-[20px] leading-6 [font-family:'Liberation_Serif',serif]">SOFTPEDIA</div>
        <div className="pl-5 text-[11px] leading-4 [font-family:'Liberation_Sans',sans-serif]">www.softpedia.com</div>
      </div>
    </div>
  );
}

/* ---------- toolbar ---------- */

const Tool = ({ label, children, boxed }: { label: string; children: ReactNode; boxed?: boolean }) => (
  <button
    aria-label={label}
    className={`flex h-[22px] w-[22px] shrink-0 items-center justify-center ${boxed ? 'rounded-[2px] border border-[#8aa5cc] bg-[#eef4fc]' : ''}`}
  >
    {children}
  </button>
);
const Drop = ({ muted }: { muted?: boolean }) => (
  <button aria-label="More" className="flex h-[22px] w-[11px] shrink-0 items-center justify-center">
    <Caret muted={muted} />
  </button>
);
const Sep = () => (
  <div className="flex w-1 shrink-0 justify-center">
    <div className="h-4 w-px bg-[#c3d0e2]" />
  </div>
);

function Toolbar() {
  return (
    <div className="flex h-[27px] items-center overflow-hidden bg-[#dce6f4] pt-px pl-[2px]" role="toolbar">
      <Tool label="New"><NewDoc /></Tool>
      <Tool label="Open"><Open /></Tool>
      <Drop />
      <Tool label="Save"><Save /></Tool>
      <Tool label="Print"><Print /></Tool>
      <Drop />
      <Sep />
      <Tool label="Page properties"><DocProps /></Tool>
      <Tool label="Previous page"><PageNav /></Tool>
      <Tool label="Next page"><PageNav fwd /></Tool>
      <Tool label="Go to page"><HandDoc /></Tool>
      <Sep />
      <Tool label="Refresh"><Refresh /></Tool>
      <Tool label="Zoom out"><Magnifier /></Tool>
      <Tool label="Zoom in"><Magnifier plus /></Tool>
      <Sep />
      <Tool label="Snap"><Snap /></Tool>
      <Tool label="Trackers"><Tracker /></Tool>
      <label className="relative ml-1 flex h-[22px] w-[70px] shrink-0 items-center rounded-[2px] border border-[#c8962e] bg-linear-to-b from-[#fdd08a] to-[#ffc65c] pl-[2px]">
        <GridDots />
        <select aria-label="Grid size" className="h-full flex-1 appearance-none bg-transparent pl-[3px] text-[11px] text-[#1e395b] outline-none">
          <option>5.00</option>
        </select>
        <span className="pointer-events-none flex h-full w-3 items-center justify-center border-l border-[#c8962e]">
          <Caret />
        </span>
      </label>
      <Tool label="Descriptions" boxed><AaAll /></Tool>
      <Sep />
      <Tool label="Line"><LineI /></Tool>
      <Tool label="Rectangle"><RectI /></Tool>
      <Tool label="Circle"><CircleI /></Tool>
      <Tool label="Arc"><ArcI /></Tool>
      <Tool label="Ellipse"><EllipseI /></Tool>
      <Tool label="Curve"><CurveI /></Tool>
      <Sep />
      <Tool label="Text"><TextA /></Tool>
      <Tool label="Text attributes"><TextB /></Tool>
      <Sep />
      <Tool label="Select"><Cursor /></Tool>
      <Tool label="Select component"><CursorBox /></Tool>
      <Tool label="Undo"><Undo /></Tool>
      <Drop muted />
      <Tool label="Redo"><Undo flip /></Tool>
      <Drop muted />
      <Tool label="Wire"><IBeam /></Tool>
      <Sep />
      <Tool label="Potential"><IBeam red /></Tool>
      <Tool label="Bus"><BarsCross /></Tool>
      <Sep />
      <Tool label="Orthogonal wire"><StepLine /></Tool>
      <Tool label="Multi wires"><StarLines /></Tool>
      <Sep />
      <Tool label="Wire number"><WireLabel /></Tool>
      <Sep />
      <Tool label="Cut"><Cut /></Tool>
      <Tool label="Copy"><Copy /></Tool>
      <Tool label="Paste"><Paste /></Tool>
      <Tool label="Delete"><Delete /></Tool>
      <Sep />
      <Tool label="Delete node"><CutNode /></Tool>
      <Tool label="Split wire"><Diagonal /></Tool>
      <Tool label="Align right"><AlignBars /></Tool>
      <Tool label="Align left"><AlignBars flip /></Tool>
      <Sep />
      <Tool label="Cross references"><Network /></Tool>
      <Sep />
      <Tool label="Database"><DbWindow /></Tool>
      <Tool label="Checks"><CheckWindow /></Tool>
      <Sep />
      <Tool label="Customize toolbar">
        <svg width="5" height="7" viewBox="0 0 5 7" aria-hidden="true">
          <path d="M0 0h5v1H0zM0 3h5L2.500 6z" fill="#44566e" />
        </svg>
      </Tool>
    </div>
  );
}

/* ---------- side panels ---------- */

function PanelHeader({ title }: { title: string }) {
  return (
    <header className="flex h-[19px] shrink-0 items-center bg-linear-to-b from-[#bfcddc] to-[#d6e3f1] pr-1 pl-1 text-black">
      <h2 className="flex-1 pt-px">{title}</h2>
      <button aria-label={`Pin ${title}`} className="mr-[10px]">
        <Pin />
      </button>
      <button aria-label={`Close ${title}`} className="flex h-3 w-3 items-center justify-center bg-[#c8504f]">
        <CloseX />
      </button>
    </header>
  );
}

type Node = { text: string; level: 0 | 1 | 2; box?: '+' | '-'; icon: 'project' | 'folders' | 'node' | 'lock'; last?: boolean; sel?: boolean };
const TREE: Node[] = [
  { text: 'C:\\Users\\SoftpediaEditor\\Desktop', level: 0, box: '-', icon: 'project' },
  { text: 'Project cover sheet', level: 1, box: '+', icon: 'folders' },
  { text: 'Circuit diagrams (IEEE)', level: 1, box: '-', icon: 'folders' },
  { text: '0003 SUPPLY', level: 2, icon: 'node' },
  { text: '0004 POWER', level: 2, icon: 'node', sel: true },
  { text: '0005 INPUT CARD 1', level: 2, icon: 'node' },
  { text: '0006 INPUT CARD 2', level: 2, icon: 'lock' },
  { text: '0007 OUTPUT CARD 1', level: 2, icon: 'lock' },
  { text: '0008 PNEUMATIC DIAGRAM', level: 2, icon: 'lock', last: true },
  { text: 'Installations', level: 1, icon: 'folders' },
  { text: 'Cabinets', level: 1, box: '+', icon: 'folders' },
  { text: 'Other documents', level: 1, icon: 'folders' },
  { text: 'Graphical lists', level: 1, box: '+', icon: 'folders' },
  { text: 'Database', level: 1, box: '+', icon: 'folders', last: true },
];

function Guide({ d, box }: { d: string; box?: '+' | '-' }) {
  return (
    <svg width="20" height="16" viewBox="0 0 20 16" fill="none" className="shrink-0" shapeRendering="crispEdges" aria-hidden="true">
      <path d={d} stroke="#8c8c8c" strokeDasharray="1 1" />
      {box && (
        <>
          <rect x="6.500" y="4.500" width="8" height="8" fill="#fff" stroke="#8c8c8c" />
          <path d={box === '+' ? 'M8 8.500h5M10.500 6v5' : 'M8 8.500h5'} stroke="#000" />
        </>
      )}
    </svg>
  );
}

function Tree() {
  return (
    <ul className="min-h-0 flex-1 overflow-hidden pt-[2px] text-[11px] text-black [font-family:'Liberation_Sans',Arial,sans-serif]" role="tree">
      {TREE.map((n) => (
        <li key={n.text} role="treeitem" className="flex h-4 items-center">
          {n.level === 0 && <Guide d="M14 8.500h6" box={n.box} />}
          {n.level === 1 && (
            <>
              <Guide d="" />
              <Guide d={`M10.500 0V${n.last ? 8 : 16}M10 8.500H20`} box={n.box} />
            </>
          )}
          {n.level === 2 && (
            <>
              <Guide d="" />
              <Guide d="M10.500 0V16" />
              <Guide d={`M10.500 0V${n.last ? 8 : 16}M10 8.500H20`} />
            </>
          )}
          <span className="flex w-5 shrink-0 items-center justify-center">
            {n.icon === 'project' && <ProjectIcon />}
            {n.icon === 'folders' && <Folders />}
            {n.icon === 'node' && <SwitchNode />}
            {n.icon === 'lock' && <Lock />}
          </span>
          <span className={`h-4 px-1 leading-4 whitespace-nowrap ${n.sel ? 'bg-[#efefef]' : ''}`}>{n.text}</span>
        </li>
      ))}
    </ul>
  );
}

function Workspace() {
  return (
    <aside className="flex w-[200px] shrink-0 flex-col">
      <PanelHeader title="Workspace" />
      <div className="mt-[1px] flex min-h-0 flex-1 flex-col overflow-hidden border border-b-0 border-[#b4b4b4] bg-white pr-[2px]">
        <Tree />
        <div className="ml-[2px] flex h-2 shrink-0 justify-between bg-[#f4f4f4]">
          <div className="w-[7px] border-r border-[#999] bg-[#f7f7f7]" />
          <div className="mr-auto w-[124px] border border-t-[#fff] border-r-[#777] border-b-[#888] border-l-[#ccc] bg-[#efefef]" />
          <div className="w-[7px] border-r border-b border-[#999] bg-[#f7f7f7]" />
        </div>
      </div>
      <div className="flex h-6 shrink-0 text-[#8a8f98]" role="tablist">
        <button role="tab" aria-selected="true" className="flex w-[68px] items-center gap-[2px] overflow-hidden border-r border-b border-[#1f3a6e] pl-[6px] whitespace-nowrap text-[#33415c]">
          <ProjectIcon />
          Works...
        </button>
        <button role="tab" className="flex w-[64px] items-center gap-px overflow-hidden border-t border-r border-t-[#1f3a6e] border-r-[#b0b0b0] pl-[3px] whitespace-nowrap">
          <SymbolsIcon />
          Symbols
        </button>
        <button role="tab" className="flex flex-1 items-center gap-[2px] overflow-hidden border-t border-t-[#1f3a6e] pl-[2px] whitespace-nowrap">
          <CommandsIcon />
          Comm...
        </button>
      </div>
    </aside>
  );
}

function DocTab({ title, active, first }: { title: string; active?: boolean; first?: boolean }) {
  return (
    <button
      role="tab"
      aria-selected={!!active}
      className={`relative flex h-[22px] w-[158px] shrink-0 items-center pl-[22px] whitespace-nowrap text-black ${
        active ? 'z-20 -ml-[15px] font-bold' : first ? 'z-10' : '-ml-[15px]'
      }`}
    >
      <svg className="absolute inset-0" width="158" height="23" viewBox="0 0 158 23" aria-hidden="true">
        <path d="M0 22.500L20 2.500Q22 .5 25 .5H154Q157.500.5 157.500 4V22.500" fill={active ? '#fff' : '#efefef'} stroke="#a6a6a6" />
      </svg>
      <span className="relative flex flex-1 items-center">
        <TabNode />
        <span className={`flex-1 text-center ${active ? 'pl-1' : 'pl-3'}`}>{title}</span>
      </span>
      {active ? (
        <span className="relative mr-[5px] flex h-3 w-[13px] items-center justify-center bg-[#c8504f]">
          <CloseX />
        </span>
      ) : (
        <span className="w-[14px]" />
      )}
    </button>
  );
}

function DocumentArea() {
  return (
    <main className="ml-1 flex min-w-0 flex-1 flex-col border border-[#a9a9a9] bg-[#f3f3f3]">
      <div className="flex h-6 shrink-0 items-end border-b border-[#a9a9a9] bg-[#f7f7f7]" role="tablist">
        <button aria-label="Scroll tabs left" className="flex h-full w-[21px] items-center pl-[6px]">
          <svg width="6" height="9" viewBox="0 0 6 9" fill="none"><path d="M5.500.5v8l-5-4z" stroke="#44566e" /></svg>
        </button>
        <DocTab title="Softpedia: 0005" first />
        <DocTab title="Softpedia: 0006" />
        <DocTab title="Softpedia: 0004" active />
        <button aria-label="Scroll tabs right" className="ml-auto flex h-full w-4 items-center">
          <svg width="6" height="9" viewBox="0 0 6 9" fill="none"><path d="M.5.5v8l5-4z" stroke="#44566e" /></svg>
        </button>
      </div>
      <div className="m-[2px] mt-px flex min-h-0 flex-1 overflow-hidden border-t-2 border-l-2 border-[#757575] bg-[#cad3e3] pt-[17px] pl-[5px]">
        <Schematic className="h-[491px] w-[761px] shrink-0" />
      </div>
    </main>
  );
}

function SidePanels() {
  return (
    <aside className="ml-[5px] flex w-[200px] shrink-0 flex-col bg-[#f4f4f4]">
      <PanelHeader title="Properties" />
      <div className="mt-[1px] flex h-[327px] shrink-0 flex-col border border-[#a9a9a9] bg-[#f0f0f0]">
        <div className="relative flex flex-1 bg-white pt-[1px]">
          <table className="h-full w-full table-fixed border-collapse text-left text-black">
            <thead>
              <tr className="h-[22px] border-b border-[#e2ebf6] bg-[#fcfcfc]">
                <th className="w-[100px] border-r border-[#e2ebf6] pl-[6px] font-normal">Name</th>
                <th className="pl-[6px] font-normal">Value</th>
              </tr>
            </thead>
            <tbody>
              <tr>
                <td className="border-r border-[#eee]" />
                <td />
              </tr>
            </tbody>
          </table>
          <div className="absolute right-0 bottom-0 flex h-[238px] w-2 flex-col items-center bg-[#f2f2f2]">
            <div className="flex h-2 w-2 items-center justify-center border-r border-b border-[#555] bg-[#eee]">
              <svg width="5" height="3" viewBox="0 0 5 3"><path d="M0 3h5L2.500 0z" fill="#000" /></svg>
            </div>
            <div className="h-[56px] w-2 border border-t-white border-r-[#555] border-b-[#555] border-l-[#ccc] bg-[#eee]" />
            <div className="mt-auto flex h-2 w-2 items-center justify-center border-r border-b border-[#555] bg-[#eee]">
              <svg width="5" height="3" viewBox="0 0 5 3"><path d="M0 0h5L2.500 3z" fill="#000" /></svg>
            </div>
          </div>
        </div>
        <div className="m-[1px] mt-[3px] h-[60px] border border-[#a4a4a4]" />
      </div>
      <div className="h-1 shrink-0" />
      <PanelHeader title="Preview" />
      <div className="mt-[2px] flex flex-1 items-center justify-center bg-[#cad3e3]">
        <Schematic className="mb-px w-[190px] outline outline-[#999]" smooth />
      </div>
    </aside>
  );
}

export default function App() {
  return (
    <div className="flex h-screen min-h-[600px] w-full flex-col overflow-hidden border border-[#6d9cc9] bg-[#8ec7fb] text-[11px] text-[#1e395b] [font-family:'Open_Sans','Noto_Sans',sans-serif]">
      <header className="flex h-[30px] shrink-0 items-center pl-[9px]">
        <svg width="17" height="17" viewBox="0 0 17 17" aria-hidden="true" className="mt-1">
          <rect width="17" height="17" rx="2" fill="#153a63" />
          <g fill="none" stroke="#fff" strokeWidth="1.300">
            <path d="M4.500 1.500H1.800V3.500H4.300V5.700H1.200M6.500 3.700h3.500V1.700H6.700V5.700H10M12 3.700h3.500V1.700H12.200V5.700h3.300M14 8.700h-4V15h4M10 11.800h3.500" />
          </g>
        </svg>
        <h1 className="mt-1 ml-[3px] flex-1 text-[14px] text-[#1b1b1b]">SEE Electrical - Softpedia: 0004</h1>
        <div className="flex h-full items-start">
          <button aria-label="Minimize" className="flex h-[20px] w-[27px] items-center justify-center pt-1">
            <svg width="8" height="8" viewBox="0 0 8 8"><path d="M0 4h8v2H0z" fill="#111" /></svg>
          </button>
          <button aria-label="Maximize" className="flex h-[20px] w-[27px] items-center justify-center">
            <svg width="10" height="8" viewBox="0 0 10 8" fill="none"><path d="M.5 1h9v6.500h-9z" stroke="#111" /><path d="M0 1h10" stroke="#111" strokeWidth="2" /></svg>
          </button>
          <button aria-label="Close" className="mr-[6px] flex h-[20px] w-[45px] items-center justify-center bg-[#c8504f]">
            <svg width="8" height="7" viewBox="0 0 8 7"><path d="M.7.2l6.600 6.600M7.300.2L.7 6.800" stroke="#fff" strokeWidth="1.600" /></svg>
          </button>
        </div>
      </header>

      <div className="mx-[7px] mb-[7px] flex min-h-0 flex-1 flex-col border-t border-[#7d9fc3] bg-[#f7f7f7]">
        <nav className="flex h-6 shrink-0 items-end bg-[#dfe9f5]" role="tablist">
          <button className="h-[23px] w-[55px] rounded-t-[2px] border border-[#2a56a4] bg-linear-to-b from-[#4a7cc4] via-[#1d4697] via-50% to-[#2f6fc4] text-white">File</button>
          {RIBBON_TABS.map(([name, w]) => (
            <button
              key={name}
              role="tab"
              aria-selected={name === 'View'}
              className={`h-[23px] shrink-0 pt-px text-center whitespace-nowrap ${w} ${
                name === 'View' ? 'rounded-t-[3px] border border-b-0 border-[#a9bbd4] bg-[#f8fbff]' : 'border-b border-[#b6c6db]'
              }`}
            >
              {name}
            </button>
          ))}
          <div className="flex h-full flex-1 items-center justify-end gap-[7px] border-b border-[#b6c6db] pr-[4px]">
            <button className="flex items-center gap-[9px] pt-1">
              Style <Caret />
            </button>
            <button aria-label="Help">
              <Ic>
                <circle cx="8" cy="7.500" r="6.500" fill="#2f62d0" stroke="#dfe6f2" />
                <circle cx="8" cy="7.500" r="7.300" stroke="#6f86ad" strokeWidth=".8" />
                <path d="M5.800 6q0-2.300 2.200-2.300t2.200 2-2.200 2.800v1M8 10.500v1.700" stroke="#fff" strokeWidth="1.700" />
              </Ic>
            </button>
            <button aria-label="About" className="ml-px">
              <Ic>
                <circle cx="8" cy="7.500" r="6.800" fill="#f4f8fe" stroke="#9fb4d4" />
                <path d="M6.500 6.500H8.500v4.500M6 11h5M8 3v2" stroke="#2f6fe0" strokeWidth="1.800" />
              </Ic>
            </button>
          </div>
        </nav>
        <Ribbon />
        <Toolbar />
        <div className="flex min-h-0 flex-1">
          <Workspace />
          <DocumentArea />
          <SidePanels />
        </div>
        <footer className="flex h-[20px] shrink-0 items-center border-t border-[#c9c9c9] bg-[#f0f0f0] pt-[2px] pl-1 text-black">
          <span className="flex-1">For Help, press F1</span>
          <span className="border-l border-[#cfcfcf] px-1 text-[#808080]">CAP</span>
          <span className="border-l border-[#cfcfcf] px-1">NUM</span>
          <span className="border-x border-[#cfcfcf] px-1 text-[#808080]">SCRL</span>
          <span className="w-2" />
        </footer>
      </div>
    </div>
  );
}
